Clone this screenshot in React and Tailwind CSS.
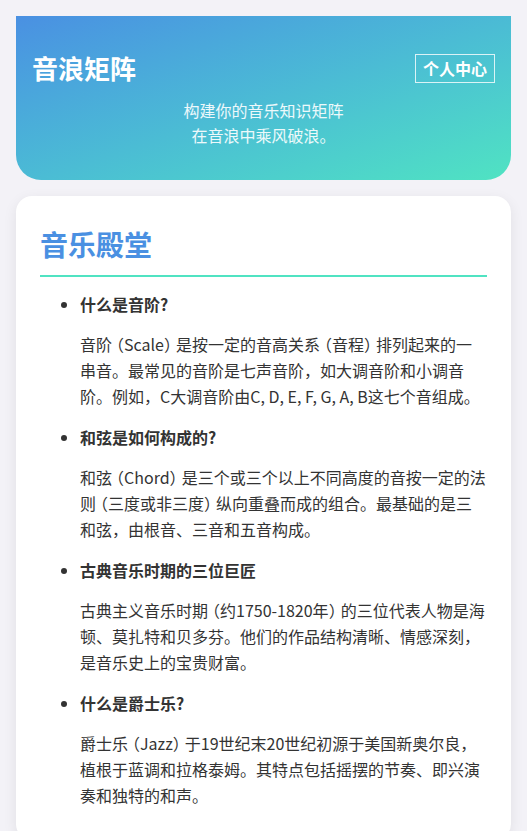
import React from "react";

const items = [
  {
    q: "什么是音阶?",
    a: "音阶（Scale）是按一定的音高关系（音程）排列起来的一串音。最常见的音阶是七声音阶，如大调音阶和小调音阶。例如，C大调音阶由C, D, E, F, G, A, B这七个音组成。",
  },
  {
    q: "和弦是如何构成的?",
    a: "和弦（Chord）是三个或三个以上不同高度的音按一定的法则（三度或非三度）纵向重叠而成的组合。最基础的是三和弦，由根音、三音和五音构成。",
  },
  {
    q: "古典音乐时期的三位巨匠",
    a: "古典主义音乐时期（约1750-1820年）的三位代表人物是海顿、莫扎特和贝多芬。他们的作品结构清晰、情感深刻，是音乐史上的宝贵财富。",
  },
  {
    q: "什么是爵士乐?",
    a: "爵士乐（Jazz）于19世纪末20世纪初源于美国新奥尔良，植根于蓝调和拉格泰姆。其特点包括摇摆的节奏、即兴演奏和独特的和声。",
  },
];

function Para({ text }) {
  const parts = text.split(/([（）])/);
  return parts.map((p, i) => {
    if (p === "（")
      return (
        <span key={i} className="pl-[4px] [font-feature-settings:'halt']">
          （
        </span>
      );
    if (p === "）")
      return (
        <span key={i} className="pr-[4px] [font-feature-settings:'halt']">
          ）
        </span>
      );
    return <React.Fragment key={i}>{p}</React.Fragment>;
  });
}

export default function App() {
  return (
    <div
      className="min-h-screen bg-[#f3f2f7] p-4 text-[#333]"
      style={{ fontFamily: '"Noto Sans CJK SC", "Noto Sans", sans-serif' }}
    >
      <header className="rounded-b-[25px] bg-gradient-to-br from-[#4a90e2] to-[#50e3c2] px-4 pt-[37px] pb-[32px] text-white">
        <div className="flex h-[30px] items-center justify-between">
          <h1 className="text-[26px] font-bold leading-[30px]">音浪矩阵</h1>
          <button className="border border-white/80 px-[7px] py-[3px] text-[16px] font-bold leading-[21px] text-white">
            个人中心
          </button>
        </div>
        <p className="mt-[15px] text-center text-[16px] leading-[25px] text-white/90">
          构建你的音乐知识矩阵
          <br />
          在音浪中乘风破浪。
        </p>
      </header>

      <main className="mt-4 rounded-[16px] bg-white px-6 pt-6 pb-8 shadow-[0_4px_14px_rgba(0,0,0,0.08)]">
        <h2 className="border-b-2 border-[#50e3c2] pb-[7px] text-[28px] font-bold leading-[48px] text-[#4a90e2]">
          音乐殿堂
        </h2>
        <ul className="mt-[14px] list-disc pl-10">
          {items.map((it, i) => (
            <li key={i} className={i > 0 ? "mt-[15px]" : ""}>
              <strong className="block text-[16px] font-bold leading-[26px]">{it.q}</strong>
              <p className="mt-[14px] text-[16px] leading-[26px]">
                <Para text={it.a} />
              </p>
            </li>
          ))}
        </ul>
      </main>
    </div>
  );
}
